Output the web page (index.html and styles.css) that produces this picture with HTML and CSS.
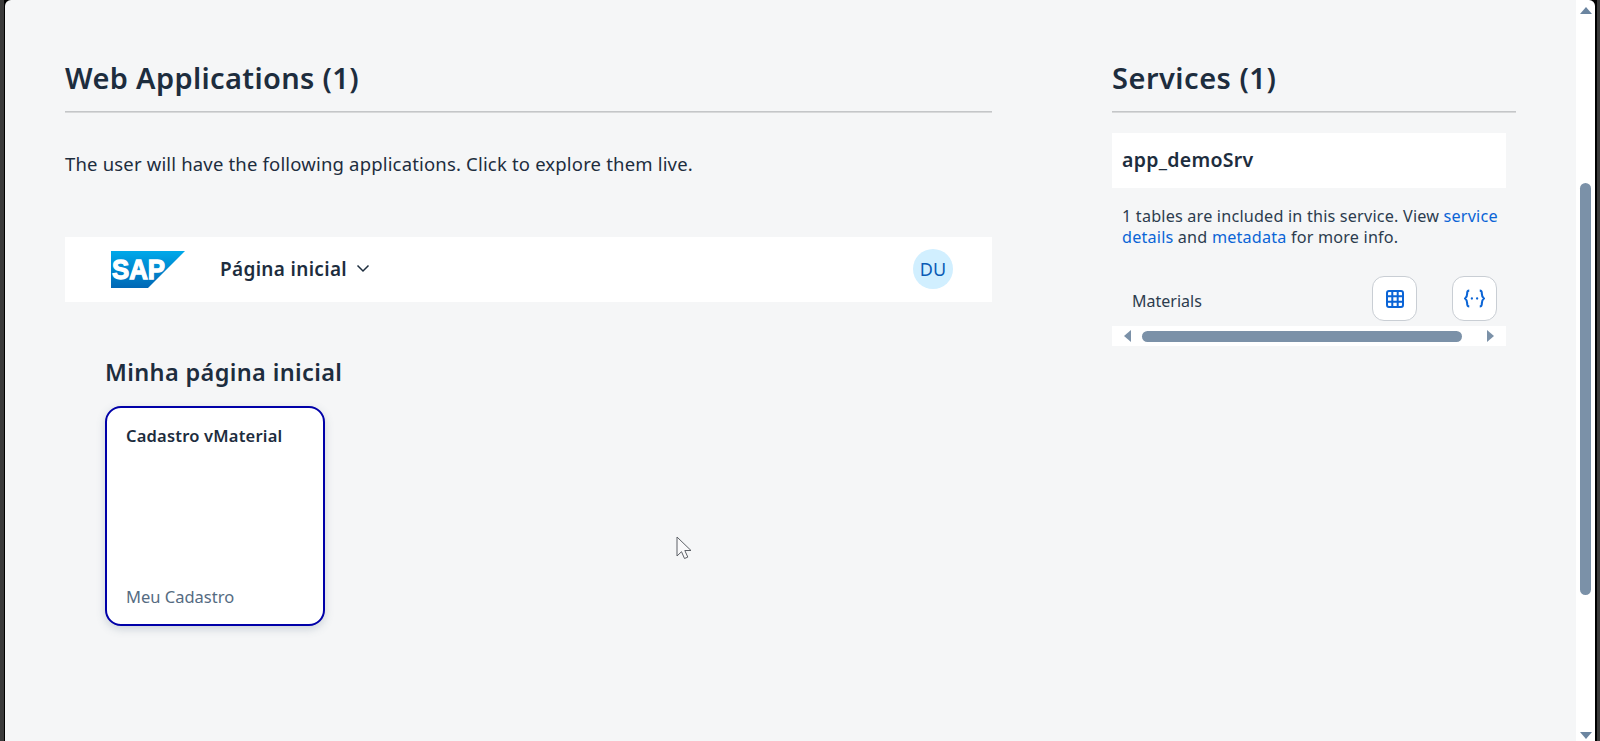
FILE: index.html
```html
<!DOCTYPE html>
<html lang="en">
<head>
<meta charset="utf-8">
<title>Web Applications</title>
<link rel="stylesheet" href="styles.css">
</head>
<body>
<div class="frame">
  <main class="content">
    <section class="apps">
      <h1 class="section-title">Web Applications (1)</h1>
      <p class="intro">The user will have the following applications. Click to explore them live.</p>
      <header class="shellbar">
        <svg class="sap-logo" viewBox="0 0 74 37" aria-label="SAP">
          <defs>
            <linearGradient id="sapg" x1="0" y1="0" x2="0" y2="1">
              <stop offset="0" stop-color="#00a9ea"/>
              <stop offset="1" stop-color="#0067b5"/>
            </linearGradient>
          </defs>
          <polygon points="0,0 74,0 37,37 0,37" fill="url(#sapg)"/>
          <text class="sap-text" x="1" y="28" textLength="53" lengthAdjust="spacingAndGlyphs">SAP</text>
        </svg>
        <button class="nav-menu">Página inicial
          <svg class="chevron" viewBox="0 0 14 9"><path d="M1.5 1.5 7 7l5.5-5.5"/></svg>
        </button>
        <div class="avatar">DU</div>
      </header>
      <div class="home">
        <h2 class="home-title">Minha página inicial</h2>
        <article class="tile">
          <div class="tile-title">Cadastro vMaterial</div>
          <div class="tile-sub">Meu Cadastro</div>
        </article>
      </div>
    </section>
    <aside class="services">
      <h1 class="section-title">Services (1)</h1>
      <div class="service-col">
        <div class="service-name">app_demoSrv</div>
        <p class="service-desc">1 tables are included in this service. View <a href="#">service details</a> and <a href="#">metadata</a> for more info.</p>
        <div class="entity-row">
          <span class="entity-name">Materials</span>
          <button class="icon-btn">
            <svg class="icon-grid" viewBox="0 0 18 18"><rect x="1" y="1" width="16" height="16" rx="2"/><path d="M1 6.300h16M1 11.700h16M6.300 1v16M11.700 1v16"/></svg>
          </button>
          <button class="icon-btn">
            <svg class="icon-braces" viewBox="0 0 20 18"><path d="M5 1.500c-2 0-2 1-2 3s0 3-2 4.500c2 1.500 2 2.500 2 4.500s0 3 2 3M15 1.500c2 0 2 1 2 3s0 3 2 4.500c-2 1.500-2 2.500-2 4.500s0 3-2 3"/><circle class="dot" cx="7.500" cy="9" r="1.100"/><circle class="dot" cx="12.500" cy="9" r="1.100"/></svg>
          </button>
        </div>
        <div class="hscroll">
          <span class="arrow arrow-left"></span>
          <span class="hthumb"></span>
          <span class="arrow arrow-right"></span>
        </div>
      </div>
    </aside>
  </main>
  <div class="vscroll">
    <span class="arrow arrow-up"></span>
    <span class="vthumb"></span>
    <span class="arrow arrow-down"></span>
  </div>
</div>
<svg class="cursor" viewBox="0 0 17 24"><path d="M1 1v19l4.500-4.300 3 6.800 3.300-1.400-3-6.600H15z"/></svg>
</body>
</html>
```
FILE: styles.css
```css
* { box-sizing: border-box; }
html, body { margin: 0; height: 100%; overflow: hidden; }
body {
  font-family: "Noto Sans", "Open Sans", Arial, sans-serif;
  color: #1d2d3e;
  background: #3a3a3a;
}
.frame {
  height: 741px;
  display: flex;
  margin: 0 3px 0 4px;
  border-left: 1px solid #000;
  border-right: 2px solid #000;
  background: #000;
}
.content {
  flex: 1;
  display: flex;
  background: #f5f6f7;
  padding: 60px 60px 0 60px;
  border-top-left-radius: 6px;
}
.apps { width: 927px; margin-right: 120px; }
.services { width: 404px; }
.section-title {
  margin: 0;
  height: 52px;
  font-size: 29px;
  line-height: 36px;
  letter-spacing: .35px;
  font-weight: 600;
  color: #1d2d3e;
  border-bottom: 1px solid #c4c6c8;
  box-shadow: 0 1px 0 #d8d9da;
}
.services .section-title { letter-spacing: .5px; }
.intro { margin: 40px 0 0; font-size: 18.500px; line-height: 24px; letter-spacing: .17px; color: #1d2d3e; }
.shellbar {
  margin-top: 61px;
  height: 65px;
  background: #fff;
  display: flex;
  align-items: center;
  padding: 0 39px 0 46px;
}
.sap-logo { width: 74px; height: 37px; flex: none; }
.sap-text { font-family: "Liberation Sans", Arial, sans-serif; font-size: 28px; font-weight: 700; fill: #fff; stroke: #fff; stroke-width: 1.300px; }
.nav-menu {
  margin-left: 35px;
  margin-bottom: 2px;
  border: 0;
  background: none;
  padding: 0;
  font: 600 19px/24px "Noto Sans", sans-serif;
  letter-spacing: .32px;
  color: #1d2d3e;
  display: flex;
  align-items: center;
  gap: 9px;
}
.chevron { width: 14px; height: 9px; fill: none; stroke: #1d2d3e; stroke-width: 1.500; }
.avatar {
  margin-left: auto;
  margin-bottom: 2px;
  width: 40px;
  height: 40px;
  border-radius: 50%;
  background: #d1efff;
  color: #0a5bb5;
  font-size: 18px;
  display: flex;
  align-items: center;
  justify-content: center;
}
.home { padding: 55px 40px 0; }
.home-title { margin: 0; font-size: 23.500px; line-height: 30px; letter-spacing: .36px; font-weight: 600; color: #1d2d3e; }
.tile {
  margin-top: 19px;
  width: 220px;
  height: 220px;
  background: #fff;
  border: 2px solid #0000a8;
  border-radius: 16px;
  box-shadow: 0 3px 8px rgba(85, 107, 130, .25);
  padding: 17px 19px 16px;
  display: flex;
  flex-direction: column;
  justify-content: space-between;
}
.tile-title { font-size: 16.500px; line-height: 22px; letter-spacing: .2px; font-weight: 600; }
.tile-sub { font-size: 16.500px; line-height: 22px; color: #556b82; }
.service-col { width: 394px; margin-top: 21px; }
.service-name {
  height: 55px;
  background: #fff;
  padding: 0 10px;
  font-size: 19.500px;
  line-height: 53px;
  letter-spacing: .3px;
  font-weight: 600;
}
.service-desc { margin: 18px 0 0; padding: 0 5px 0 10px; font-size: 16.200px; line-height: 21px; letter-spacing: .19px; color: #2c3c4e; }
.service-desc a { color: #0a64d6; text-decoration: none; }
.entity-row { margin-top: 28px; height: 50px; display: flex; align-items: flex-start; padding: 0 9px 0 20px; }
.entity-name { font-size: 16px; line-height: 22px; margin-top: 14px; margin-right: auto; color: #2c3c4e; }
.icon-btn {
  width: 45px;
  height: 45px;
  margin-left: 35px;
  padding: 0;
  background: #fff;
  border: 1px solid #c9ced4;
  border-radius: 12px;
  display: flex;
  align-items: center;
  justify-content: center;
}
.icon-btn svg { fill: none; stroke: #0a64d6; stroke-width: 2; }
.icon-grid { width: 18px; height: 18px; }
.icon-braces { width: 21px; height: 19px; }
.icon-btn .dot { fill: #0a64d6; stroke: none; }
.hscroll { height: 20px; background: #fff; display: flex; align-items: center; padding: 0 12px; }
.hthumb { width: 320px; height: 11px; background: #7b91a8; border-radius: 6px; margin: 0 25px 0 11px; }
.arrow { display: block; width: 0; height: 0; border-style: solid; border-color: transparent; flex: none; }
.arrow-left { border-width: 6.500px 7px 6.500px 0; border-right-color: #7b91a8; }
.arrow-right { border-width: 6.500px 0 6.500px 7px; border-left-color: #7b91a8; }
.vscroll {
  width: 19px;
  background: #fff;
  display: flex;
  flex-direction: column;
  align-items: center;
  border-top-right-radius: 6px;
}
.arrow-up { margin-top: 7px; border-width: 0 6.500px 7px; border-bottom-color: #6b85a0; }
.vthumb { margin-top: 169px; width: 11px; height: 412px; border-radius: 6px; background: #7b91a8; }
.arrow-down { margin-top: 137px; border-width: 7px 6.500px 0; border-top-color: #6b85a0; }
.cursor {
  position: absolute;
  left: 676px;
  top: 536px;
  width: 17px;
  height: 24px;
  fill: #f9f9fa;
  stroke: #5c6066;
  stroke-width: 1;
}
```
